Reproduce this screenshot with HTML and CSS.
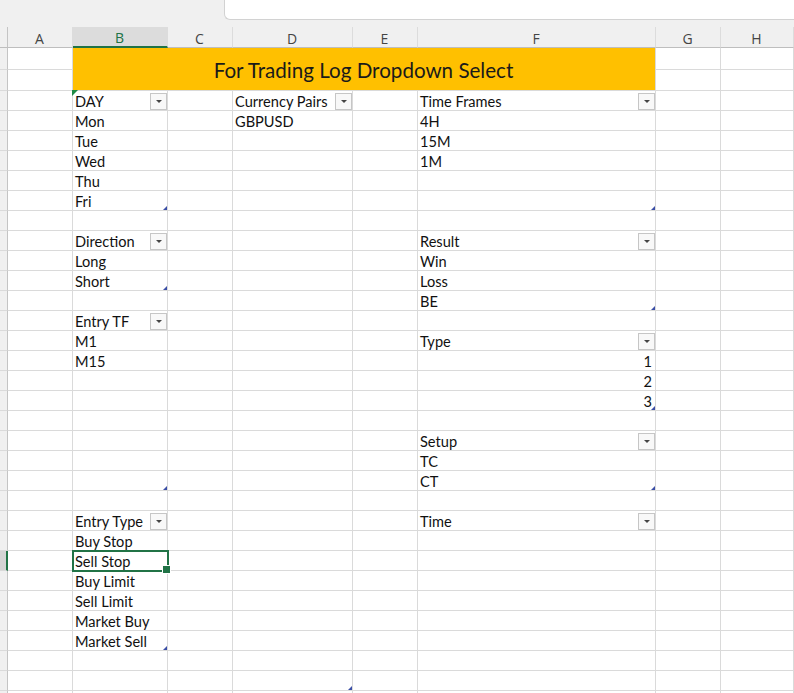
FILE: index.html
```html
<!DOCTYPE html>
<html lang="en">
<head>
    <meta charset="UTF-8">
    <meta name="viewport" content="width=device-width, initial-scale=1.0">
    <title>Trading Log Lists</title>
    <link rel="stylesheet" href="styles.css">
</head>
<body>
    <div class="topbar">
        <div class="formula"></div>
    </div>

    <div class="sheet">
        <!-- column headers -->
        <div class="rh corner"></div><div class="ch">A</div><div class="ch on">B</div><div class="ch">C</div><div class="ch">D</div><div class="ch">E</div><div class="ch">F</div><div class="ch">G</div><div class="ch">H</div>

        <!-- title rows (merged B:F) -->
        <div class="title">For Trading Log Dropdown Select</div>
        <div class="rh"></div><div></div><div></div><div></div>
        <div class="rh"></div><div></div><div></div><div></div>

        <div class="rh"></div><div></div><div class="err">DAY<span class="dd"></span></div><div></div><div>Currency Pairs<span class="dd"></span></div><div></div><div>Time Frames<span class="dd"></span></div><div></div><div></div>
        <div class="rh"></div><div></div><div>Mon</div><div></div><div>GBPUSD</div><div></div><div>4H</div><div></div><div></div>
        <div class="rh"></div><div></div><div>Tue</div><div></div><div></div><div></div><div>15M</div><div></div><div></div>
        <div class="rh"></div><div></div><div>Wed</div><div></div><div></div><div></div><div>1M</div><div></div><div></div>
        <div class="rh"></div><div></div><div>Thu</div><div></div><div></div><div></div><div></div><div></div><div></div>
        <div class="rh"></div><div></div><div class="end">Fri</div><div></div><div></div><div></div><div class="end"></div><div></div><div></div>
        <div class="rh"></div><div></div><div></div><div></div><div></div><div></div><div></div><div></div><div></div>
        <div class="rh"></div><div></div><div>Direction<span class="dd"></span></div><div></div><div></div><div></div><div>Result<span class="dd"></span></div><div></div><div></div>
        <div class="rh"></div><div></div><div>Long</div><div></div><div></div><div></div><div>Win</div><div></div><div></div>
        <div class="rh"></div><div></div><div class="end">Short</div><div></div><div></div><div></div><div>Loss</div><div></div><div></div>
        <div class="rh"></div><div></div><div></div><div></div><div></div><div></div><div class="end">BE</div><div></div><div></div>
        <div class="rh"></div><div></div><div>Entry TF<span class="dd"></span></div><div></div><div></div><div></div><div></div><div></div><div></div>
        <div class="rh"></div><div></div><div>M1</div><div></div><div></div><div></div><div>Type<span class="dd"></span></div><div></div><div></div>
        <div class="rh"></div><div></div><div>M15</div><div></div><div></div><div></div><div class="num">1</div><div></div><div></div>
        <div class="rh"></div><div></div><div></div><div></div><div></div><div></div><div class="num">2</div><div></div><div></div>
        <div class="rh"></div><div></div><div></div><div></div><div></div><div></div><div class="num end">3</div><div></div><div></div>
        <div class="rh"></div><div></div><div></div><div></div><div></div><div></div><div></div><div></div><div></div>
        <div class="rh"></div><div></div><div></div><div></div><div></div><div></div><div>Setup<span class="dd"></span></div><div></div><div></div>
        <div class="rh"></div><div></div><div></div><div></div><div></div><div></div><div>TC</div><div></div><div></div>
        <div class="rh"></div><div></div><div class="end"></div><div></div><div></div><div></div><div class="end">CT</div><div></div><div></div>
        <div class="rh"></div><div></div><div></div><div></div><div></div><div></div><div></div><div></div><div></div>
        <div class="rh"></div><div></div><div>Entry Type<span class="dd"></span></div><div></div><div></div><div></div><div>Time<span class="dd"></span></div><div></div><div></div>
        <div class="rh"></div><div></div><div>Buy Stop</div><div></div><div></div><div></div><div></div><div></div><div></div>
        <div class="rh on"></div><div></div><div class="sel">Sell Stop</div><div></div><div></div><div></div><div></div><div></div><div></div>
        <div class="rh"></div><div></div><div>Buy Limit</div><div></div><div></div><div></div><div></div><div></div><div></div>
        <div class="rh"></div><div></div><div>Sell Limit</div><div></div><div></div><div></div><div></div><div></div><div></div>
        <div class="rh"></div><div></div><div>Market Buy</div><div></div><div></div><div></div><div></div><div></div><div></div>
        <div class="rh"></div><div></div><div class="end">Market Sell</div><div></div><div></div><div></div><div></div><div></div><div></div>
        <div class="rh"></div><div></div><div></div><div></div><div></div><div></div><div></div><div></div><div></div>
        <div class="rh"></div><div></div><div></div><div></div><div class="end"></div><div></div><div></div><div></div><div></div>
        <div class="rh"></div><div></div><div></div><div></div><div></div><div></div><div></div><div></div><div></div>
    </div>
</body>
</html>
```

FILE: styles.css
```css
* {
    box-sizing: border-box;
}
html, body {
    margin: 0;
    height: 100%;
    overflow: hidden;
    background: #fff;
}
body {
    font-family: Lato, "Liberation Sans", sans-serif;
    color: #111;
}

.topbar {
    height: 28px;
    background: #f0f0f0;
    padding-left: 224px;
}
.formula {
    height: 21px;
    margin-top: -1px;
    background: #fff;
    border: 1px solid #d2d2d2;
    border-right: none;
    border-bottom-left-radius: 6px;
}

.sheet {
    display: grid;
    grid-template-columns: 8px 65px 95px 65px 120px 65px 238px 65px 1fr;
    grid-template-rows: 21px 22px 21px;
    grid-auto-rows: 20px;
}
.sheet > div {
    position: relative;
    display: flex;
    align-items: center;
    padding: 2px 3px 0 2px;
    border-right: 1px solid #dadada;
    border-bottom: 1px solid #dadada;
    font-size: 14.6px;
    white-space: nowrap;
}

/* headers */
.sheet > .ch {
    justify-content: center;
    background: #f0f0f0;
    font-family: "Open Sans", sans-serif;
    font-size: 14px;
    color: #444;
    border-right-color: #dcdcdc;
    border-bottom-color: #bebebe;
}
.sheet > .ch.on {
    background: #dcdcdc;
    color: #217346;
    border-bottom: 2px solid #217346;
}
.sheet > .rh {
    background: #f0f0f0;
    border-right-color: #c4c4c4;
}
.sheet > .rh.corner {
    border-bottom-color: #bebebe;
}
.sheet > .rh.on {
    background: #d4d4d4;
    border-right: 2px solid #217346;
}

.sheet > .title {
    grid-column: 3 / 8;
    grid-row: 2 / 4;
    justify-content: center;
    background: #ffc000;
    font-size: 20.6px;
    color: #1a1a1a;
}

.sheet > .num {
    justify-content: flex-end;
}

/* dropdown button on header cells */
.dd {
    margin-left: auto;
    margin-right: -3px;
    align-self: flex-end;
    width: 17px;
    height: 17px;
    border: 1px solid #c6c6c6;
    background: #f8f8f8;
    display: flex;
    align-items: center;
    justify-content: center;
}
.dd::before {
    content: "";
    border-left: 3px solid transparent;
    border-right: 3px solid transparent;
    border-top: 3px solid #444;
}

/* table end marker */
.end::after {
    content: "";
    position: absolute;
    right: 0;
    bottom: 0;
    border-left: 4px solid transparent;
    border-bottom: 4px solid #3a4ea6;
}

/* green error flag */
.err::before {
    content: "";
    position: absolute;
    left: -1px;
    top: -1px;
    border-top: 6px solid #1f8a45;
    border-right: 6px solid transparent;
}

/* active cell */
.sheet > .sel {
    outline: 2px solid #217346;
    outline-offset: -1px;
    z-index: 2;
}
.sel::after {
    content: "";
    position: absolute;
    right: -4px;
    bottom: -4px;
    width: 7px;
    height: 7px;
    background: #217346;
    border: 1px solid #fff;
}
```
